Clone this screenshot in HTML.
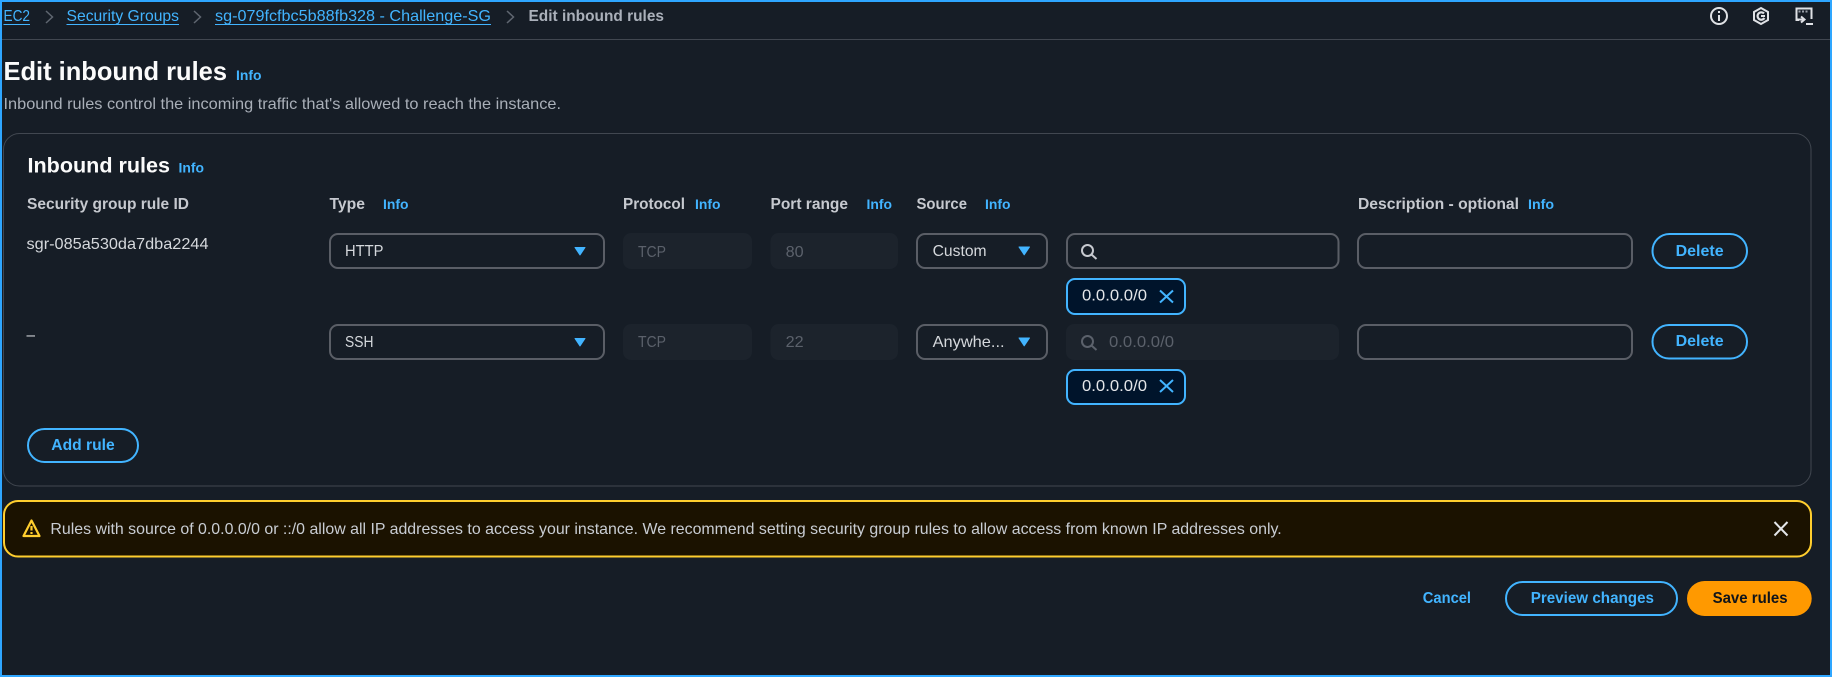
<!DOCTYPE html>
<html lang="en">
<head>
<meta charset="utf-8">
<title>Edit inbound rules</title>
<style>
html,body{margin:0;padding:0;width:1832px;height:677px;overflow:hidden;background:#161d26}
svg{display:block}
text{font-family:"Liberation Sans",sans-serif;font-size:16px;fill:#d5d8dc;white-space:pre}
.b{font-weight:700}
.i{font-weight:700;font-size:14px;fill:#42b4ff}
.l{fill:#42b4ff}
.h{font-weight:700;fill:#c6c9cf}
.d{fill:#5b616b}
.inp{fill:none;stroke:#5a5e66;stroke-width:2}
.dis{fill:#1c232c}
.btn{fill:none;stroke:#42b4ff;stroke-width:2}
.tok{fill:#00142b;stroke:#42b4ff;stroke-width:2}
.a{fill:#42b4ff;stroke:#42b4ff;stroke-width:1;stroke-linejoin:round}
.x{stroke:#42b4ff;stroke-width:2;fill:none}
.c{fill:none;stroke:#5f6670;stroke-width:1.5}
</style>
</head>
<body>
<svg width="1832" height="677" viewBox="0 0 1832 677" xmlns="http://www.w3.org/2000/svg">
<rect x="0" y="0" width="1832" height="677" fill="#161d26"/>
<rect x="1" y="1" width="1830" height="675" fill="none" stroke="#2ea6ff" stroke-width="2"/>
<line x1="2" y1="39.5" x2="1830" y2="39.5" stroke="#414750"/>

<!-- breadcrumb -->
<text class="l" x="3.5" y="21" textLength="26.5" lengthAdjust="spacingAndGlyphs">EC2</text>
<line x1="3.5" x2="30" y1="24.5" y2="24.5" stroke="#42b4ff"/>
<path class="c" d="M46 11L52.5 17L46 23"/>
<text class="l" x="66.5" y="21" textLength="112.5" lengthAdjust="spacingAndGlyphs">Security Groups</text>
<line x1="66.5" x2="179" y1="24.5" y2="24.5" stroke="#42b4ff"/>
<path class="c" d="M194 11L200.5 17L194 23"/>
<text class="l" x="215" y="21" textLength="276" lengthAdjust="spacingAndGlyphs">sg-079fcfbc5b88fb328 - Challenge-SG</text>
<line x1="215" x2="491" y1="24.5" y2="24.5" stroke="#42b4ff"/>
<path class="c" d="M507 11L513.5 17L507 23"/>
<text class="b" x="528.5" y="21" textLength="135.5" lengthAdjust="spacingAndGlyphs" style="fill:#aab0ba">Edit inbound rules</text>

<!-- top right icons -->
<g fill="none" stroke="#dfe1e5" stroke-width="2">
<circle cx="1719" cy="16" r="8"/>
<line x1="1719" y1="15" x2="1719" y2="21"/>
<line x1="1719" y1="11" x2="1719" y2="13"/>
<path d="M1761 8L1768 12V20L1761 24L1754 20V12Z"/>
<path d="M1764 13.5A3.7 3.7 0 1 0 1764.4 18" stroke-width="2.2"/>
<path d="M1761 16H1765" stroke-width="2"/>
<path d="M1799 20H1796.5V8.5H1811.5V19"/>
<path d="M1801 16.5L1804.5 19.5L1801 22.5M1797 19.5H1804"/>
<line x1="1806" y1="24" x2="1813" y2="24"/>
</g>
<rect x="1798.5" y="10.5" width="2" height="2" fill="#9aa0a8"/>
<rect x="1802" y="10.5" width="2" height="2" fill="#9aa0a8"/>
<rect x="1805.5" y="10.5" width="2" height="2" fill="#9aa0a8"/>

<!-- page title -->
<text class="b" x="3.5" y="80" textLength="223.5" lengthAdjust="spacingAndGlyphs" style="font-size:26px;fill:#fbfbfb">Edit inbound rules</text>
<text class="i" x="236" y="80" textLength="25.5" lengthAdjust="spacingAndGlyphs">Info</text>
<text x="3.5" y="109" textLength="557.5" lengthAdjust="spacingAndGlyphs" style="fill:#a9afb8">Inbound rules control the incoming traffic that's allowed to reach the instance.</text>

<!-- container -->
<rect x="3.5" y="133.5" width="1807.5" height="352.5" rx="16" fill="none" stroke="#414750"/>
<text class="b" x="27.5" y="172.5" textLength="142.5" lengthAdjust="spacingAndGlyphs" style="font-size:21px;fill:#fbfbfb">Inbound rules</text>
<text class="i" x="178.5" y="172.5" textLength="25.5" lengthAdjust="spacingAndGlyphs">Info</text>

<!-- column headers -->
<text class="h" x="27" y="209" textLength="162" lengthAdjust="spacingAndGlyphs">Security group rule ID</text>
<text class="h" x="329.5" y="209" textLength="35.5" lengthAdjust="spacingAndGlyphs">Type</text>
<text class="i" x="383" y="209" textLength="25.5" lengthAdjust="spacingAndGlyphs">Info</text>
<text class="h" x="623" y="209" textLength="62" lengthAdjust="spacingAndGlyphs">Protocol</text>
<text class="i" x="695" y="209" textLength="25.5" lengthAdjust="spacingAndGlyphs">Info</text>
<text class="h" x="770.5" y="209" textLength="77.5" lengthAdjust="spacingAndGlyphs">Port range</text>
<text class="i" x="866.5" y="209" textLength="25.5" lengthAdjust="spacingAndGlyphs">Info</text>
<text class="h" x="916.5" y="209" textLength="50.5" lengthAdjust="spacingAndGlyphs">Source</text>
<text class="i" x="985" y="209" textLength="25.5" lengthAdjust="spacingAndGlyphs">Info</text>
<text class="h" x="1358" y="209" textLength="161" lengthAdjust="spacingAndGlyphs">Description - optional</text>
<text class="i" x="1528" y="209" textLength="26" lengthAdjust="spacingAndGlyphs">Info</text>

<!-- row 1 -->
<text x="26.5" y="249" textLength="182" lengthAdjust="spacingAndGlyphs">sgr-085a530da7dba2244</text>
<rect class="inp" x="330" y="234" width="274" height="34" rx="8"/>
<text x="345" y="256" textLength="38.5" lengthAdjust="spacingAndGlyphs">HTTP</text>
<path class="a" d="M575 247.5H585L580 255Z"/>
<rect class="dis" x="623" y="233" width="129" height="36" rx="8"/>
<text class="d" x="638" y="257" textLength="28" lengthAdjust="spacingAndGlyphs">TCP</text>
<rect class="dis" x="770.5" y="233" width="127.5" height="36" rx="8"/>
<text class="d" x="785.7" y="257" textLength="18" lengthAdjust="spacingAndGlyphs">80</text>
<rect class="inp" x="917" y="234" width="130" height="34" rx="8"/>
<text x="932.6" y="256" textLength="54" lengthAdjust="spacingAndGlyphs">Custom</text>
<path class="a" d="M1019 247H1029.5L1024.2 254.8Z"/>
<rect class="inp" x="1067" y="234" width="271.5" height="34" rx="8"/>
<g fill="none" stroke="#c6c9cf" stroke-width="2"><circle cx="1087.5" cy="250.5" r="5.5"/><line x1="1091.5" y1="254.5" x2="1096.5" y2="259"/></g>
<rect class="tok" x="1067" y="279" width="118" height="35" rx="8"/>
<text x="1082" y="300.5" textLength="65" lengthAdjust="spacingAndGlyphs" style="fill:#e4e6e9">0.0.0.0/0</text>
<path class="x" d="M1160 290.5L1173 302.5M1173 290.5L1160 302.5"/>
<rect class="inp" x="1358" y="234" width="274" height="34" rx="8"/>
<rect class="btn" x="1652.5" y="234" width="94.5" height="34" rx="17"/>
<text class="b l" x="1675.6" y="256" textLength="48" lengthAdjust="spacingAndGlyphs">Delete</text>

<!-- row 2 -->
<text x="26.5" y="340" textLength="8.5" lengthAdjust="spacingAndGlyphs">–</text>
<rect class="inp" x="330" y="325" width="274" height="34" rx="8"/>
<text x="345" y="347" textLength="28.5" lengthAdjust="spacingAndGlyphs">SSH</text>
<path class="a" d="M575 338.5H585L580 346Z"/>
<rect class="dis" x="623" y="324" width="129" height="36" rx="8"/>
<text class="d" x="638" y="347" textLength="28" lengthAdjust="spacingAndGlyphs">TCP</text>
<rect class="dis" x="770.5" y="324" width="127.5" height="36" rx="8"/>
<text class="d" x="785.7" y="347" textLength="18" lengthAdjust="spacingAndGlyphs">22</text>
<rect class="inp" x="917" y="325" width="130" height="34" rx="8"/>
<text x="932.6" y="347" textLength="72" lengthAdjust="spacingAndGlyphs">Anywhe...</text>
<path class="a" d="M1019 338H1029.5L1024.2 345.8Z"/>
<rect class="dis" x="1066" y="324" width="273" height="36" rx="8"/>
<g fill="none" stroke="#5b616b" stroke-width="2"><circle cx="1087.5" cy="341.5" r="5.5"/><line x1="1091.5" y1="345.5" x2="1096.5" y2="350"/></g>
<text class="d" x="1109" y="347" textLength="65" lengthAdjust="spacingAndGlyphs">0.0.0.0/0</text>
<rect class="tok" x="1067" y="370" width="118" height="34" rx="8"/>
<text x="1082" y="391" textLength="65" lengthAdjust="spacingAndGlyphs" style="fill:#e4e6e9">0.0.0.0/0</text>
<path class="x" d="M1160 380L1173 392M1173 380L1160 392"/>
<rect class="inp" x="1358" y="325" width="274" height="34" rx="8"/>
<rect class="btn" x="1652.5" y="325" width="94.5" height="33.5" rx="16.5"/>
<text class="b l" x="1675.6" y="346" textLength="48" lengthAdjust="spacingAndGlyphs">Delete</text>

<!-- add rule -->
<rect class="btn" x="28" y="429" width="110" height="33" rx="16.5"/>
<text class="b l" x="51.3" y="450" textLength="63.4" lengthAdjust="spacingAndGlyphs">Add rule</text>

<!-- warning -->
<rect x="4" y="501" width="1807" height="55.5" rx="14" fill="#1b1200" stroke="#ffce2e" stroke-width="2"/>
<g fill="none" stroke="#ffce2e" stroke-width="2.2" stroke-linejoin="round">
<path d="M31.5 520.5L39.5 536H23.5Z"/>
<line x1="31.5" y1="526" x2="31.5" y2="530.5"/>
<line x1="31.5" y1="532" x2="31.5" y2="534"/>
</g>
<text x="50.4" y="534" textLength="1231.3" lengthAdjust="spacingAndGlyphs" style="fill:#c9cdd3">Rules with source of 0.0.0.0/0 or ::/0 allow all IP addresses to access your instance. We recommend setting security group rules to allow access from known IP addresses only.</text>
<path d="M1774.5 522L1787.5 535.5M1787.5 522L1774.5 535.5" fill="none" stroke="#e4e6e9" stroke-width="2"/>

<!-- footer -->
<text class="b l" x="1422.8" y="603" textLength="48.2" lengthAdjust="spacingAndGlyphs">Cancel</text>
<rect class="btn" x="1506" y="582" width="171" height="33" rx="16.5"/>
<text class="b l" x="1530.7" y="603" textLength="123.3" lengthAdjust="spacingAndGlyphs">Preview changes</text>
<rect x="1687" y="581" width="124.7" height="35" rx="17.5" fill="#ff9900"/>
<text class="b" x="1712.6" y="603" textLength="75" lengthAdjust="spacingAndGlyphs" style="fill:#0f141a">Save rules</text>
</svg>
</body>
</html>
